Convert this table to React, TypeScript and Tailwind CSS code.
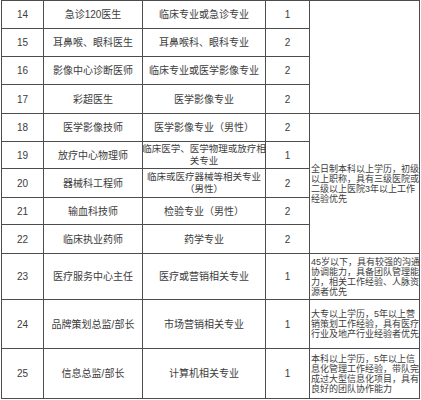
const rows = [
  { no: "14", pos: "急诊120医生", major: ["临床专业或急诊专业"], n: "1", h: "h-[27px]" },
  { no: "15", pos: "耳鼻喉、眼科医生", major: ["耳鼻喉科、眼科专业"], n: "2", h: "h-[27px]" },
  { no: "16", pos: "影像中心诊断医师", major: ["临床专业或医学影像专业"], n: "2", h: "h-[27px]" },
  { no: "17", pos: "彩超医生", major: ["医学影像专业"], n: "2", h: "h-[28px]" },
  { no: "18", pos: "医学影像技师", major: ["医学影像专业（男性）"], n: "2", h: "h-[27px]" },
  { no: "19", pos: "放疗中心物理师", major: ["临床医学、医学物理或放疗相", "关专业"], n: "1", h: "h-[26px]" },
  { no: "20", pos: "器械科工程师", major: ["临床或医疗器械等相关专业", "（男性）"], n: "2", h: "h-[28px]" },
  { no: "21", pos: "输血科技师", major: ["检验专业（男性）"], n: "2", h: "h-[26px]" },
  { no: "22", pos: "临床执业药师", major: ["药学专业"], n: "2", h: "h-[28px]" },
  { no: "23", pos: "医疗服务中心主任", major: ["医疗或营销相关专业"], n: "1", h: "h-[45px]" },
  { no: "24", pos: "品牌策划总监/部长", major: ["市场营销相关专业"], n: "1", h: "h-[48px]" },
  { no: "25", pos: "信息总监/部长", major: ["计算机相关专业"], n: "1", h: "h-[49px]" },
];

const notes: { lines: string[]; span: string; start: string }[] = [
  { lines: [], span: "row-span-4", start: "row-start-1" },
  {
    lines: ["全日制本科以上学历，初级", "以上职称，具有三级医院或", "二级以上医院3年以上工作", "经验优先"],
    span: "row-span-5",
    start: "row-start-5",
  },
  {
    lines: ["45岁以下，具有较强的沟通", "协调能力，具备团队管理能", "力，相关工作经验、人脉资", "源者优先"],
    span: "row-span-1",
    start: "row-start-10",
  },
  {
    lines: ["大专以上学历，5年以上营", "销策划工作经验，具有医疗", "行业及地产行业经验者优先"],
    span: "row-span-1",
    start: "row-start-11",
  },
  {
    lines: ["本科以上学历，5年以上信", "息化管理工作经验，带队完", "成过大型信息化项目，具有", "良好的团队协作能力"],
    span: "row-span-1",
    start: "row-start-12",
  },
];

const rowStarts = [
  "row-start-1", "row-start-2", "row-start-3", "row-start-4", "row-start-5", "row-start-6",
  "row-start-7", "row-start-8", "row-start-9", "row-start-10", "row-start-11", "row-start-12",
];

export default function App() {
  return (
    <div
      className="w-[421px] h-[400px] bg-white overflow-hidden text-[#3c3c3c]"
      style={{ fontFamily: '"Liberation Sans", "Noto Sans CJK SC", sans-serif' }}
    >
      <div className="ml-px grid w-[419px] grid-cols-[41px_98px_122px_43px_109px] gap-px bg-[#4d4d4d] p-px">
        {rows.map((r, i) => (
          <div key={r.no} className="contents">
            <div className={`${rowStarts[i]} col-start-1 ${r.h} bg-white flex items-center justify-center text-[10px]`}>
              {r.no}
            </div>
            <div className={`${rowStarts[i]} col-start-2 bg-white flex items-center justify-center text-[10px] whitespace-nowrap`}>
              {r.pos}
            </div>
            <div
              className={`${rowStarts[i]} col-start-3 bg-white flex flex-col items-center justify-center whitespace-nowrap ${
                r.major.length > 1 ? "text-[9.5px] leading-[12px]" : "text-[10px]"
              }`}
            >
              {r.major.map((m) => (
                <span key={m}>{m}</span>
              ))}
            </div>
            <div className={`${rowStarts[i]} col-start-4 bg-white flex items-center justify-center text-[10px]`}>
              {r.n}
            </div>
          </div>
        ))}
        {notes.map((n, i) => (
          <div
            key={i}
            className={`${n.start} ${n.span} col-start-5 bg-white flex flex-col justify-center pl-[1px] text-[9px] leading-[10px] whitespace-nowrap`}
          >
            {n.lines.map((l) => (
              <span key={l}>{l}</span>
            ))}
          </div>
        ))}
      </div>
    </div>
  );
}
